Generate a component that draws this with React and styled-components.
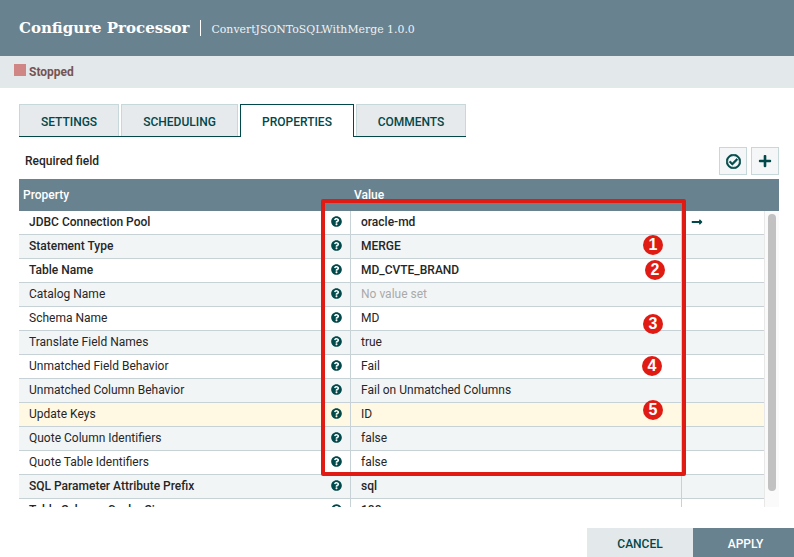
import React from "react";
import styled, { createGlobalStyle } from "styled-components";
import { FaQuestionCircle, FaRegCheckCircle, FaPlus, FaLongArrowAltRight } from "react-icons/fa";

const GlobalStyle = createGlobalStyle`
  html, body {
    margin: 0;
    padding: 0;
    background: #fff;
    overflow: hidden;
  }
  * {
    box-sizing: border-box;
  }
`;

const Dialog = styled.div`
  position: relative;
  width: 794px;
  height: 557px;
  overflow: hidden;
  font-family: Roboto, "Liberation Sans", sans-serif;
  font-size: 12px;
  color: #262626;
`;

const Header = styled.div`
  height: 56px;
  padding: 0 19px;
  background: #688290;
  color: #fff;
  display: flex;
  align-items: center;
`;

const Title = styled.div`
  font-family: "DejaVu Serif", serif;
  font-size: 15px;
  font-weight: 700;
  padding-right: 11px;
  border-right: 1px solid #fff;
  line-height: 16px;
`;

const SubTitle = styled.div`
  font-family: "DejaVu Serif", serif;
  font-size: 10.9px;
  margin: 3px 0 0 10px;
  opacity: 0.9;
`;

const StatusBar = styled.div`
  height: 32px;
  padding: 0 14px 1px;
  background: #e3e8eb;
  display: flex;
  align-items: center;
  gap: 3px;
  font-weight: 700;
  color: #775351;
`;

const StatusSquare = styled.span`
  width: 12px;
  height: 12px;
  margin-top: -4px;
  background: #d18686;
`;

const Tabs = styled.div`
  display: flex;
  gap: 2px;
  height: 33px;
  margin: 16px 0 0 19px;
  width: 447px;
  border-bottom: 1px solid #004849;
`;

const Tab = styled.div`
  width: ${(p) => p.$width}px;
  height: ${(p) => (p.$active ? 33 : 32)}px;
  padding-top: 2px;
  display: flex;
  align-items: center;
  justify-content: center;
  font-weight: 500;
  color: #004849;
  background: ${(p) => (p.$active ? "#fff" : "#e6eaed")};
  border: 1px solid ${(p) => (p.$active ? "#004849" : "#c7d8da")};
  border-bottom: ${(p) => (p.$active ? "none" : "0")};
  position: relative;
  z-index: 1;
`;

const Toolbar = styled.div`
  height: 42px;
  padding: 10px 15px 0 25px;
  display: flex;
  justify-content: space-between;
  align-items: flex-start;
`;

const Required = styled.div`
  font-weight: 500;
  margin-top: 7px;
  line-height: 14px;
`;

const ToolButtons = styled.div`
  display: flex;
  gap: 4px;
`;

const ToolButton = styled.div`
  width: 28px;
  height: 28px;
  display: flex;
  align-items: center;
  justify-content: center;
  color: #004849;
  background: #f4f6f7;
  border: 1px solid #c7d8da;
`;

const CheckIcon = styled(FaRegCheckCircle)`
  width: 15px;
  height: 15px;
  stroke: currentColor;
  stroke-width: 24px;
`;

const Table = styled.div`
  margin-left: 19px;
  width: 760px;
`;

const TableHead = styled.div`
  height: 32px;
  background: #688290;
  color: #fff;
  font-weight: 500;
  display: flex;
  align-items: center;
`;

const HeadProperty = styled.div`
  width: 335px;
  padding-left: 4px;
`;

const Viewport = styled.div`
  height: 296px;
  display: flex;
  overflow: hidden;
`;

const Rows = styled.div`
  width: 745px;
`;

const Row = styled.div`
  height: 24px;
  display: grid;
  grid-template-columns: 332px 331px 82px;
  border-bottom: 1px solid #c7d2d7;
  font-weight: ${(p) => (p.$required ? 500 : 400)};
  background: ${(p) => (p.$highlight ? "#fff8e3" : p.$odd ? "#f2f5f6" : "#fff")};
`;

const NameCell = styled.div`
  padding: 0 8px 1px 10px;
  display: flex;
  align-items: center;
  justify-content: space-between;
  border-right: 1px solid #c7d2d7;
`;

const HelpIcon = styled(FaQuestionCircle)`
  width: 11px;
  height: 11px;
  margin-bottom: 2px;
  color: #004849;
`;

const ValueCell = styled.div`
  padding: 0 0 1px 10px;
  display: flex;
  align-items: center;
  color: ${(p) => (p.$empty ? "#aaa" : "inherit")};
  border-right: 1px solid #c7d2d7;
`;

const ActionCell = styled.div`
  padding: 0 0 2px 9px;
  display: flex;
  align-items: center;
  color: #004849;
`;

const Track = styled.div`
  width: 15px;
  background: #fafafa;
  border-left: 1px solid #e8e8e8;
  padding: 3px 3px 0 3px;
`;

const Thumb = styled.div`
  width: 8px;
  height: 277px;
  border-radius: 4px;
  background: #c1c1c1;
`;

const Footer = styled.div`
  margin-top: 21px;
  display: flex;
  justify-content: flex-end;
`;

const FooterButton = styled.div`
  width: ${(p) => p.$width}px;
  height: 29px;
  padding: 2px 0 0 ${(p) => (p.$primary ? 4 : 0)}px;
  display: flex;
  align-items: center;
  justify-content: center;
  font-weight: 500;
  color: ${(p) => (p.$primary ? "#fff" : "#004849")};
  background: ${(p) => (p.$primary ? "#688290" : "#e3e8eb")};
`;

const RedBox = styled.div`
  position: absolute;
  left: 321px;
  top: 199px;
  width: 365px;
  height: 277px;
  border: 4px solid #e01b14;
  border-radius: 2px;
`;

const Badge = styled.div`
  position: absolute;
  left: ${(p) => p.$x - 10}px;
  top: ${(p) => p.$y - 10}px;
  width: 20px;
  height: 20px;
  border-radius: 50%;
  background: #e01b14;
  color: #fff;
  font-family: "Liberation Sans", sans-serif;
  font-size: 16px;
  font-weight: 700;
  display: flex;
  align-items: center;
  justify-content: center;
`;

const properties = [
  { name: "JDBC Connection Pool", value: "oracle-md", required: true, arrow: true },
  { name: "Statement Type", value: "MERGE", required: true },
  { name: "Table Name", value: "MD_CVTE_BRAND", required: true },
  { name: "Catalog Name", value: "No value set", empty: true },
  { name: "Schema Name", value: "MD" },
  { name: "Translate Field Names", value: "true" },
  { name: "Unmatched Field Behavior", value: "Fail" },
  { name: "Unmatched Column Behavior", value: "Fail on Unmatched Columns" },
  { name: "Update Keys", value: "ID", highlight: true },
  { name: "Quote Column Identifiers", value: "false" },
  { name: "Quote Table Identifiers", value: "false" },
  { name: "SQL Parameter Attribute Prefix", value: "sql", required: true },
  { name: "Table Schema Cache Size", value: "100", required: true },
];

const badges = [
  { n: 1, x: 653, y: 245 },
  { n: 2, x: 655, y: 270 },
  { n: 3, x: 653, y: 324 },
  { n: 4, x: 652, y: 366 },
  { n: 5, x: 653, y: 410 },
];

function App() {
  return (
    <Dialog>
      <GlobalStyle />
      <Header>
        <Title>Configure Processor</Title>
        <SubTitle>ConvertJSONToSQLWithMerge 1.0.0</SubTitle>
      </Header>
      <StatusBar>
        <StatusSquare />
        Stopped
      </StatusBar>
      <Tabs>
        <Tab $width={100}>SETTINGS</Tab>
        <Tab $width={117}>SCHEDULING</Tab>
        <Tab $width={114} $active>PROPERTIES</Tab>
        <Tab $width={110}>COMMENTS</Tab>
      </Tabs>
      <Toolbar>
        <Required>Required field</Required>
        <ToolButtons>
          <ToolButton><CheckIcon /></ToolButton>
          <ToolButton><FaPlus size={14} /></ToolButton>
        </ToolButtons>
      </Toolbar>
      <Table>
        <TableHead>
          <HeadProperty>Property</HeadProperty>
          <div>Value</div>
        </TableHead>
        <Viewport>
          <Rows>
            {properties.map((p, i) => (
              <Row key={p.name} $required={p.required} $highlight={p.highlight} $odd={i % 2 === 1}>
                <NameCell>
                  {p.name}
                  <HelpIcon />
                </NameCell>
                <ValueCell $empty={p.empty}>{p.value}</ValueCell>
                <ActionCell>{p.arrow && <FaLongArrowAltRight size={12} />}</ActionCell>
              </Row>
            ))}
          </Rows>
          <Track>
            <Thumb />
          </Track>
        </Viewport>
      </Table>
      <Footer>
        <FooterButton $width={106}>CANCEL</FooterButton>
        <FooterButton $width={101} $primary>APPLY</FooterButton>
      </Footer>
      <RedBox />
      {badges.map((b) => (
        <Badge key={b.n} $x={b.x} $y={b.y}>{b.n}</Badge>
      ))}
    </Dialog>
  );
}

export default App;
